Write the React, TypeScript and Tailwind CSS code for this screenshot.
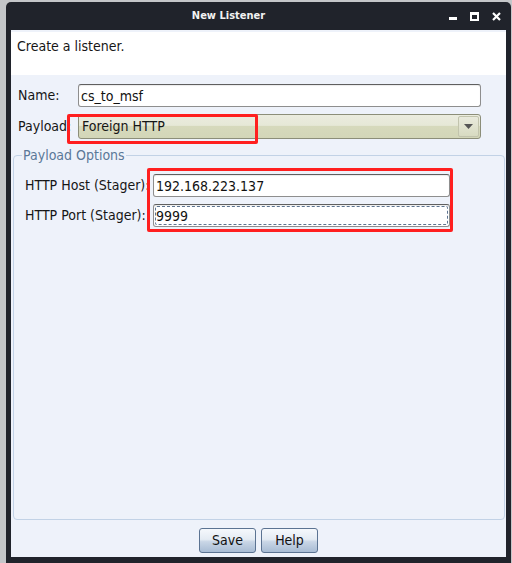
import { useState } from "react";

const font = "font-['DejaVu_Sans_Condensed','DejaVu_Sans',sans-serif]";

function TextField({ value, focused }: { value: string; focused?: boolean }) {
  return (
    <div className="relative h-[23px] flex-1 rounded-[3px] border border-[#8e8e8e] border-t-[#5f5f5f] bg-white shadow-[inset_0_1px_1px_rgba(0,0,0,0.08)]">
      {focused && (
        <div className="absolute inset-[1px] rounded-[2px] border border-dashed border-[#5d7490]" />
      )}
      <div className="flex h-full items-center pl-[2px] text-[14px] leading-none text-[#111]">{value}</div>
    </div>
  );
}

function Highlight({ className }: { className: string }) {
  return <div className={`pointer-events-none absolute rounded-[2px] border-[3px] border-[#ff1f1f] ${className}`} />;
}

export default function App() {
  const [name] = useState("cs_to_msf");

  return (
    <div className={`relative h-[563px] w-[512px] overflow-hidden bg-[#c4c6c9] ${font}`}>
      <div className="ml-[6px] mt-[2px] flex h-[561px] w-[505px] flex-col rounded-t-[5px] bg-[#20232b] px-[5px] pb-[6px]">
        {/* title bar */}
        <div className="relative flex h-[28px] shrink-0 items-center justify-center pr-[60px] text-[11px] font-bold text-[#f2f2f2]">
          New Listener
          <div className="absolute right-[5px] top-[10px] flex items-end gap-[13px]">
            <div className="mb-[1px] h-[3px] w-[8px] bg-white" />
            <div className="h-[9px] w-[9px] border-[2px] border-t-[3px] border-white" />
            <svg width="9" height="9" viewBox="0 0 9 9" className="stroke-white">
              <path d="M1 1 L8 8 M8 1 L1 8" strokeWidth="2.2" />
            </svg>
          </div>
        </div>

        {/* content */}
        <div className="relative flex flex-1 flex-col bg-[#eef2fa] pt-[2px] text-[14px] text-[#161616]">
          <div className="h-[43px] shrink-0 bg-white px-[6px] pt-[4px]">Create a listener.</div>

          <div className="mt-[9px] flex items-center pl-[7px] pr-[25px]">
            <span className="w-[60px] shrink-0">Name:</span>
            <TextField value={name} />
          </div>

          <div className="mt-[7px] flex items-center pl-[7px] pr-[25px]">
            <span className="w-[60px] shrink-0">Payload:</span>
            <div className="flex h-[25px] flex-1 items-center rounded-[3px] border border-[#8c8e79] bg-[linear-gradient(#ebecdf_0%,#e6e8d7_45%,#d6d9bc_50%,#d3d6b8_100%)] pl-[3px]">
              <span className="flex-1">Foreign HTTP</span>
              <div className="mr-[1px] flex h-[21px] w-[21px] items-center justify-center rounded-[2px] border border-[#c2c4ad] bg-[linear-gradient(#e9eadd,#d8dbc1)]">
                <svg width="9" height="5" viewBox="0 0 9 5">
                  <path d="M0 0 H9 L4.5 5 Z" fill="#555" />
                </svg>
              </div>
            </div>
          </div>

          <fieldset className="mx-[2px] mr-[1px] mt-[8px] flex flex-1 flex-col rounded-[4px] border border-[#c2d2e6] px-[11px] pb-0">
            <legend className="ml-[-3px] px-[1px] text-[14px] leading-[16px] text-[#5b7898]">Payload Options</legend>
            <div className="mt-[11px] flex items-center pr-[43px]">
              <span className="w-[128px] shrink-0">HTTP Host (Stager):</span>
              <TextField value="192.168.223.137" />
            </div>
            <div className="mt-[7px] flex items-center pr-[43px]">
              <span className="w-[128px] shrink-0">HTTP Port (Stager):</span>
              <TextField value="9999" focused />
            </div>
          </fieldset>

          <div className="flex h-[37px] shrink-0 items-start justify-center gap-[5px] pt-[8px]">
            {["Save", "Help"].map((b) => (
              <button
                key={b}
                className="h-[25px] w-[57px] rounded-[3px] border border-[#5b7392] bg-[linear-gradient(#f5f8fc_0%,#e4ebf3_45%,#c9d6e6_55%,#a8bcd4_100%)] text-[14px] text-[#111]"
              >
                {b}
              </button>
            ))}
          </div>

          <Highlight className="left-[56px] top-[84px] h-[30px] w-[191px]" />
          <Highlight className="left-[136px] top-[138px] h-[64px] w-[306px]" />
        </div>
      </div>
    </div>
  );
}
